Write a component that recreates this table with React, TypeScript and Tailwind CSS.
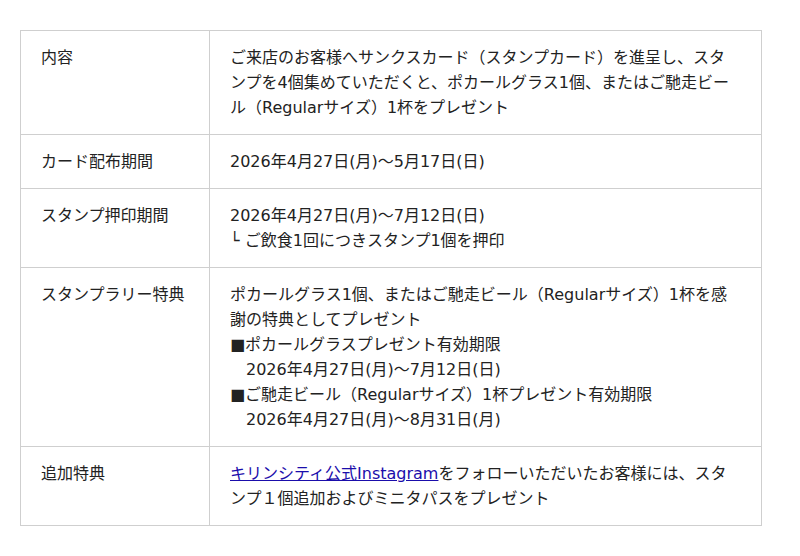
const rows: { label: string; body: React.ReactNode }[] = [
  {
    label: "内容",
    body: (
      <>
        ご来店のお客様へサンクスカード（スタンプカード）を進呈し、スタ
        <br />
        ンプを4個集めていただくと、ポカールグラス1個、またはご馳走ビー
        <br />
        ル（Regularサイズ）1杯をプレゼント
      </>
    ),
  },
  { label: "カード配布期間", body: "2026年4月27日(月)〜5月17日(日)" },
  {
    label: "スタンプ押印期間",
    body: (
      <>
        2026年4月27日(月)〜7月12日(日)
        <br />└ ご飲食1回につきスタンプ1個を押印
      </>
    ),
  },
  {
    label: "スタンプラリー特典",
    body: (
      <>
        ポカールグラス1個、またはご馳走ビール（Regularサイズ）1杯を感謝の特典としてプレゼント
        <br />■ポカールグラスプレゼント有効期限
        <br />　2026年4月27日(月)〜7月12日(日)
        <br />■ご馳走ビール（Regularサイズ）1杯プレゼント有効期限
        <br />　2026年4月27日(月)〜8月31日(月)
      </>
    ),
  },
  {
    label: "追加特典",
    body: (
      <>
        <a href="#" className="text-[#1a0dab] underline">
          キリンシティ公式Instagram
        </a>
        をフォローいただいたお客様には、スタンプ１個追加およびミニタパスをプレゼント
      </>
    ),
  },
];

export default function App() {
  return (
    <div className="min-h-[556px] bg-white px-5 pt-[30px] font-['DejaVu_Sans','Noto_Sans_CJK_JP',sans-serif] text-[16px] leading-[25px] text-[#222]">
      <div className="w-[742px] border border-[#cfcfcf]">
        {rows.map((row, i) => (
          <div
            key={row.label}
            className={`grid grid-cols-[189px_1fr] ${i < rows.length - 1 ? "border-b border-[#cfcfcf]" : ""}`}
          >
            <div className="border-r border-[#cfcfcf] px-5 py-[14px]">{row.label}</div>
            <div className="px-5 py-[14px]">{row.body}</div>
          </div>
        ))}
      </div>
    </div>
  );
}
